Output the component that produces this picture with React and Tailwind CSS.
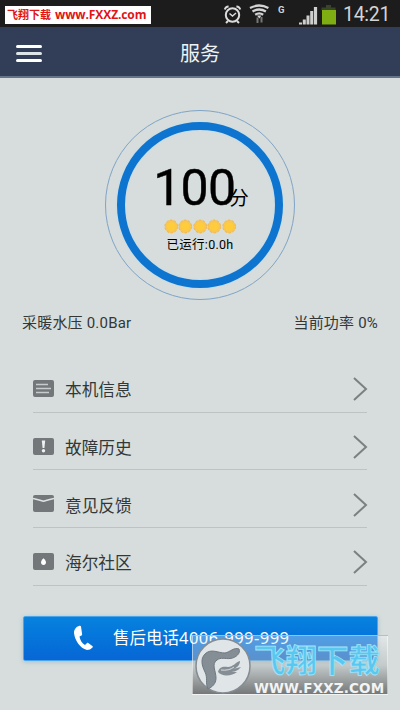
const menuItems = [
  { label: "本机信息", icon: "info" },
  { label: "故障历史", icon: "fault" },
  { label: "意见反馈", icon: "mail" },
  { label: "海尔社区", icon: "community" },
];

function ItemIcon({ name }) {
  return (
    <svg width="21" height="17" viewBox="0 0 21 17" className="relative -top-px">
      <rect width="21" height="17" rx="2" fill="#747779" />
      {name === "info" && (
        <path d="M3 4.5h12M3 8.5h15M3 12.5h13" stroke="#c6cccb" strokeWidth="1.5" />
      )}
      {name === "fault" && (
        <>
          <path d="M8.8 2.5h3.4l-.8 7.5H9.6z" fill="#eef2f2" />
          <circle cx="10.5" cy="12.8" r="1.7" fill="#eef2f2" />
        </>
      )}
      {name === "mail" && (
        <path d="M0 3.5Q5 4.5 10.5 6.2Q16 4.5 21 3.5" fill="none" stroke="#dde4e3" strokeWidth="1.6" />
      )}
      {name === "community" && (
        <path d="M10.5 5.3c1.5 1.6 2.4 2.6 2.4 4a2.4 2.7 0 0 1-4.8 0c0-1.4.9-2.4 2.4-4z" fill="#fff" />
      )}
    </svg>
  );
}

function StatusBar() {
  return (
    <div className="relative h-[27px] bg-[#1c1c1c] flex items-center justify-end pr-[9px] text-[#d4d4d4]">
      <div className="absolute left-[5px] top-[6px] w-[146px] h-[18px] bg-white flex items-center pl-[2px] text-[#e01515] font-bold whitespace-nowrap">
        <span className="text-[11px] w-[48px] relative top-px">飞翔下载</span>
        <span className="text-[12px] font-['Open_Sans'] tracking-[-0.1px]">www.FXXZ.com</span>
      </div>
      <svg width="120" height="27" viewBox="0 0 120 27" className="mr-[7px]">
        {/* alarm clock */}
        <g fill="none" stroke="#dcdcdc" strokeWidth="2">
          <circle cx="16.5" cy="15" r="6.7" />
          <path d="M13.5 13.5l3 2.5 3.5-3" strokeWidth="1.5" />
          <path d="M8.8 9.5a4 4 0 0 1 3.8-3M24.2 9.5a4 4 0 0 0-3.8-3M12 21l-2 2M21 21l2 2" />
        </g>
        {/* wifi */}
        <g fill="none" stroke="#d4d4d4" strokeWidth="2.3">
          <path d="M34 8q9.2-5 18.4 0M36.5 11.5q6.7-4 13.4 0M39.2 14.7q4-2.6 8 0" />
        </g>
        <path d="M41 15.5h4.5l-2.2 3z" fill="#d4d4d4" />
        <path d="M41.5 17.5v5.5M45.5 17v5.5" fill="none" stroke="#777" strokeWidth="2" />
        {/* signal */}
        <path
          d="M83 24.5v-2h3v2zM86.8 24.5v-5h3v5zM90.5 24.5v-9h3v9zM94.2 24.5V11h3v13.5zM97.9 24.5V7h3.2v17.5z"
          fill="#cfcfcf"
        />
        {/* battery */}
        <path d="M110 5h5v2.5h4.5v3h-14v-3h4.5z" fill="#38452a" />
        <path d="M106 10h14v14.5h-14z" fill="#7fae12" />
      </svg>
      <span className="absolute left-[278px] top-[4px] text-[9.5px] leading-3 font-bold font-[Roboto]">G</span>
      <span className="text-[19.5px] leading-[27px] font-[Roboto] w-[48px] tracking-[-0.3px] whitespace-nowrap relative top-px">
        14:21
      </span>
    </div>
  );
}

function Star() {
  return (
    <svg width="14.5" height="15" viewBox="0 0 14.5 15">
      <circle cx="7.25" cy="7.5" r="6.4" fill="#f9c650" />
      <circle cx="7.25" cy="7.5" r="6.4" fill="none" stroke="#efb653" strokeWidth="1" strokeDasharray="2.5 1.5" />
      <circle cx="7.25" cy="7.5" r="4" fill="#ffcd3c" />
    </svg>
  );
}

function ScoreDial() {
  return (
    <div className="mt-[32px] mx-auto size-[190px] rounded-full border border-[#80a4c7] p-[11px]">
      <div className="size-full rounded-full border-8 border-[#0d74cf] shadow-[0_0_2px_#b5dcf6,inset_0_0_2px_#b5dcf6] flex flex-col items-center text-black">
        <div className="mt-[31px] h-[54px] flex items-end relative left-px">
          <span className="text-[50px] leading-[54px] font-[Roboto] tracking-[-0.8px] -mr-[6px] [-webkit-text-stroke:0.4px_black]">100</span>
          <span className="text-[19.5px] leading-[22px] mb-[5px]">分</span>
        </div>
        <div className="flex mt-[4px]">
          {[1, 2, 3, 4, 5].map((n) => (
            <Star key={n} />
          ))}
        </div>
        <div className="text-[12.5px] leading-[18px] mt-[2px] whitespace-nowrap tracking-[0.25px]">已运行:0.0h</div>
      </div>
    </div>
  );
}

function Watermark() {
  return (
    <div className="absolute left-[192px] top-[635px] w-[196px] h-[60px] border border-white/50 bg-linear-to-b from-white/30 via-[#b4babb]/50 to-[#707374]/95 flex items-center">
      <svg width="58" height="58" viewBox="0 0 58 58" className="shrink-0 ml-px">
        <circle cx="29" cy="30" r="27" fill="#e0e5e8" stroke="#858c92" strokeWidth="1.5" />
        <path
          d="M14 53C11 47 14 42 11 36C8 30 6 23 11 18C17 12 24 17 31 17C36 16 40 11 45 13C47 17 42 22 36 22.5C31 23 27 21 23 24C17 28 22 35 22 42C22 48 18 51 14 53z"
          fill="#858d95"
          stroke="#6f7880"
          strokeWidth="1"
        />
        <path
          d="M24 36C25 31 29 30 34 31C39 31 42 26 46 25C46 29 43 32 39 33L47 31C44 35 40 36 36 36L43 36C38 40 28 41 24 36z"
          fill="#858d95"
        />
        <path d="M27 34q8 1 13-3" fill="none" stroke="#d8dee2" strokeWidth="1" />
      </svg>
      <div className="flex flex-col ml-[2px] mt-[11px]">
        <span className="text-[31.5px] leading-[33px] h-[35px] font-bold text-[#59c8f0] [-webkit-text-stroke:0.8px_#a5e4f8] whitespace-nowrap">
          飞翔下载
        </span>
        <span className="text-[13.5px] leading-[16px] font-bold font-['DejaVu_Sans'] text-white/90 tracking-[0.15px] whitespace-nowrap">
          WWW.FXXZ.COM
        </span>
      </div>
    </div>
  );
}

export default function App() {
  return (
    <div className="relative w-[400px] h-[710px] overflow-hidden bg-[#d6dddc] font-[Roboto,'Noto_Sans_CJK_SC',sans-serif] text-[#333738]">
      <StatusBar />
      <header className="h-[51px] bg-[#323e57] border-b-2 border-[#64748a] flex items-center px-[16px]">
        <div className="w-[26px] flex flex-col gap-[4px] mt-[3px]">
          <span className="h-[3px] rounded-sm bg-white" />
          <span className="h-[3px] rounded-sm bg-[#dce5e8]" />
          <span className="h-[3px] rounded-sm bg-white" />
        </div>
        <h1 className="flex-1 text-center text-[20px] text-[#edf2f5] mr-[26px] relative top-[2px]">服务</h1>
      </header>

      <ScoreDial />

      <div className="mt-[12px] px-[22px] h-[22px] flex justify-between items-center text-[15px] tracking-[0.2px]">
        <span>采暖水压 0.0Bar</span>
        <span>当前功率 0%</span>
      </div>

      <ul className="mt-[21px] mx-[33px]">
        {menuItems.map((item) => (
          <li
            key={item.label}
            className="h-[57.7px] border-b border-[#bcc4c3] flex items-center pt-[12px]"
          >
            <ItemIcon name={item.icon} />
            <span className="ml-[11px] text-[16.7px] relative top-[1.5px]">{item.label}</span>
            <svg width="16" height="24" viewBox="0 0 16 24" className="ml-auto relative left-px">
              <path d="M2 1l12 11L2 23" fill="none" stroke="#7b8081" strokeWidth="2" />
            </svg>
          </li>
        ))}
      </ul>

      <button className="mt-[30px] ml-[23px] w-[355px] h-[45px] rounded-[2px] border border-[#4ba5ea] bg-linear-to-b from-[#0782df] to-[#0766d5] shadow-[0_1px_4px_#a9bdcc] flex items-center text-white">
        <svg width="21" height="26" viewBox="0 0 21 26" className="ml-[49px]">
          <path
            d="M6.5.7C3 1.5 1 4.5 1 8c1 8 6 15 13 17 2 0 4-.8 5.5-2.5.5-.6.4-1-.2-1.5l-4-3c-.6-.4-1-.3-1.5.2L12 20c-3-1.5-5-5-5.5-8.5l2-1c.6-.4.7-.8.6-1.5L8 1.5c-.2-.7-.7-1-1.5-.8z"
            fill="#fff"
          />
        </svg>
        <span className="ml-[19px] text-[16.5px] whitespace-nowrap relative top-px">
          售后电话<span className="font-['Noto_Sans'] tracking-[0.45px]">4006-999-999</span>
        </span>
      </button>

      <Watermark />
    </div>
  );
}
